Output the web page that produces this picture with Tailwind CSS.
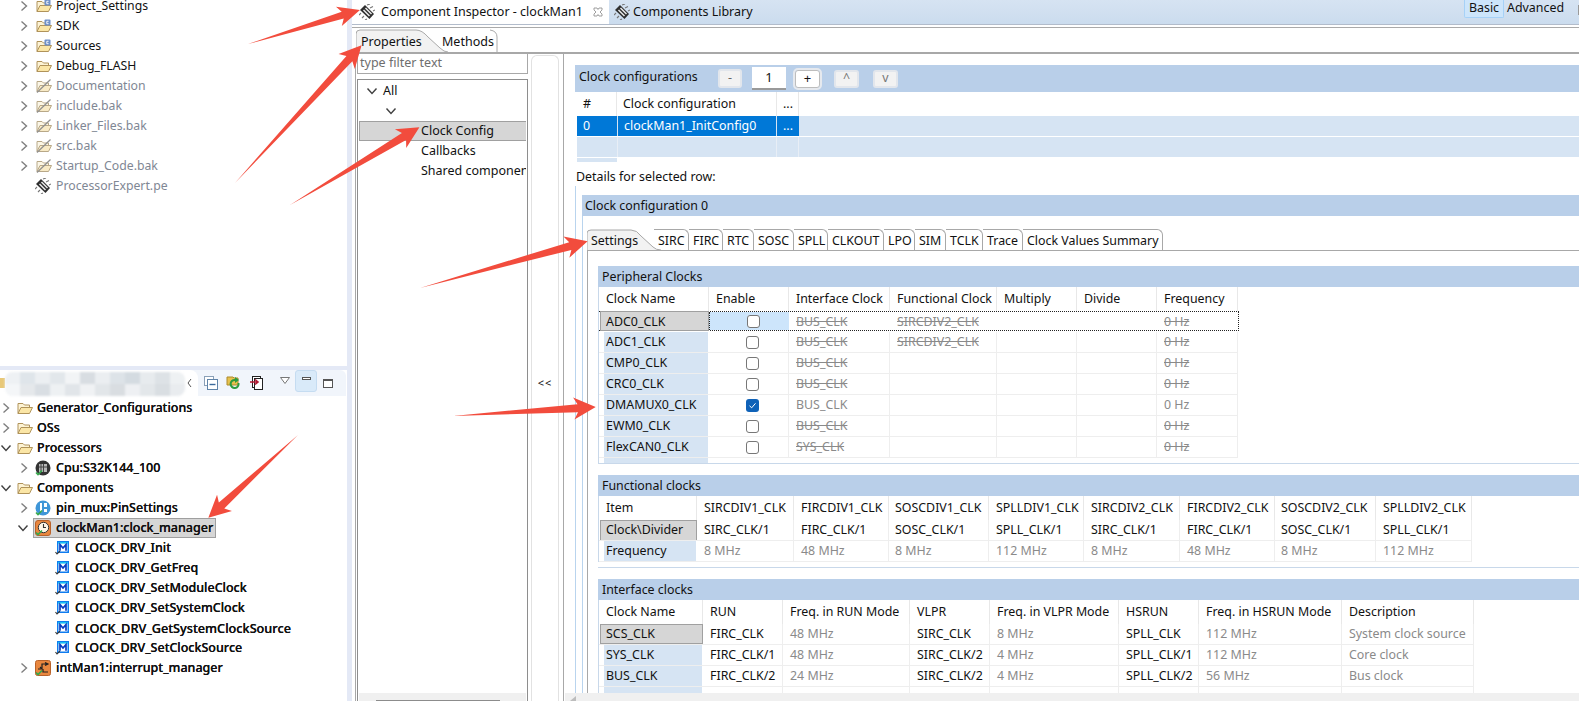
<!DOCTYPE html>
<html>
<head>
<meta charset="utf-8">
<script src="https://cdn.jsdelivr.net/npm/@tailwindcss/browser@4"></script>
</head>
<body class="m-0 bg-white">
<svg class="absolute w-0 h-0">
<defs>
<symbol id="chev-r" viewBox="0 0 10 12"><path d="M2.5 1.5 L7.5 6 L2.5 10.5" fill="none" stroke="#7f7f7f" stroke-width="1.4"/></symbol>
<symbol id="chev-d" viewBox="0 0 12 10"><path d="M1.5 2.5 L6 7.5 L10.5 2.5" fill="none" stroke="#404040" stroke-width="1.4"/></symbol>
<symbol id="folder" viewBox="0 0 16 14"><path d="M1 12.5 V2.5 H6 L7.5 4 H12.5 V6.5" fill="#fdf3d4" stroke="#b0935a"/><path d="M1 12.5 L4 6.5 H15.5 L12.5 12.5 Z" fill="#fbe6a6" stroke="#b0935a"/></symbol>
<symbol id="folder-c" viewBox="0 0 16 14"><path d="M1 12.5 V2.5 H6 L7.5 4 H12.5 V6.5" fill="#fdf3d4" stroke="#b0935a"/><path d="M1 12.5 L4 6.5 H15.5 L12.5 12.5 Z" fill="#fbe6a6" stroke="#b0935a"/><rect x="8.5" y="0.5" width="6" height="6" rx="1" fill="#6f90c8"/><path d="M12.6 2.3 H10.8 V4.7 H12.6" fill="none" stroke="#fff" stroke-width="0.9"/></symbol>
<symbol id="folder-x" viewBox="0 0 16 14"><path d="M1 12.5 V2.5 H6 L7.5 4 H12.5 V6.5" fill="#fbf6e6" stroke="#b8a888"/><path d="M1 12.5 L4 6.5 H15.5 L12.5 12.5 Z" fill="#f8eac6" stroke="#b8a888"/><path d="M1 13.5 L14.5 0.5" stroke="#8f8f8f" stroke-width="1.2"/></symbol>
<symbol id="chip" viewBox="0 0 16 16"><path d="M6 1 L15 10 L10.5 15 L1 6 Z" fill="#2f2f2f"/><path d="M6.5 4 L12.5 10 M4.5 6 L10.5 12" stroke="#e8e8e8" stroke-width="1.5"/><path d="M8 1 L11 0 M11 4 L14 2.5 M14 7 L16 6 M2 9 L0 11 M5 12 L3 14 M8 15 L6 16" stroke="#777" stroke-width="1.1"/></symbol>
<symbol id="m" viewBox="0 0 14 14"><rect x="2.75" y="0.75" width="10.5" height="10.5" fill="#fff" stroke="#0f7cf0" stroke-width="1.5"/><rect x="3" y="1" width="10" height="1.6" fill="#1ac0f4"/><path d="M5 9.8 V3.6 L8 7 L11 3.6 V9.8" fill="none" stroke="#0a3cc0" stroke-width="1.7"/><path d="M0.5 11 L2 13 L5 10" fill="none" stroke="#333" stroke-width="1.1"/></symbol>
<symbol id="cpu" viewBox="0 0 16 16"><circle cx="8" cy="8" r="7.5" fill="#333"/><rect x="4" y="4" width="8" height="8" fill="#b8b8b8"/><path d="M6 4 V12 M8.5 4 V12 M4 7 H12" stroke="#444"/><path d="M1 8.5 L3 10.5 L7 6.5" fill="none" stroke="#35a84c" stroke-width="1.6" transform="translate(0 4)"/></symbol>
<symbol id="pin" viewBox="0 0 16 16"><circle cx="8" cy="8" r="7.5" fill="#3f96d8"/><path d="M5 3 H7 V12 H5 Z M9 3 H12 V7 H9 Z M9 9 H12 V12 H9 Z" fill="#fff"/><path d="M1 8.5 L3 10.5 L7 6.5" fill="none" stroke="#35a84c" stroke-width="1.6" transform="translate(0 4)"/></symbol>
<symbol id="clk" viewBox="0 0 16 16"><rect x="0.5" y="0.5" width="15" height="15" rx="2.5" fill="#e9873f" stroke="#b9622a"/><circle cx="8.5" cy="7.5" r="5.2" fill="#fff6e6" stroke="#333"/><path d="M8.5 4 V7.5 H11" fill="none" stroke="#333" stroke-width="1.1"/><path d="M1 8.5 L3 10.5 L7 6.5" fill="none" stroke="#35a84c" stroke-width="1.6" transform="translate(0 4)"/></symbol>
<symbol id="int" viewBox="0 0 16 16"><rect x="0.5" y="0.5" width="15" height="15" rx="2" fill="#e9873f" stroke="#b9622a"/><path d="M3 9 H7 V4 H13 M5 7 L7 9 M10 2.5 L13 4 L10 5.5 M8 9 V12 H13" fill="none" stroke="#222" stroke-width="1.2"/><path d="M1 8.5 L3 10.5 L7 6.5" fill="none" stroke="#35a84c" stroke-width="1.6" transform="translate(0 4)"/></symbol>
</defs>
</svg>

<div class="relative flex w-[1579px] h-[701px] overflow-hidden text-[12.4px] leading-none text-[#111] font-['Noto_Sans',sans-serif]">

<!-- LEFT COLUMN -->
<div class="flex flex-col w-[347px] shrink-0 h-full">
  <div class="flex flex-col h-[370px] shrink-0 -mt-[4px] text-[12.25px]">
    <div class="flex items-center h-5 shrink-0 pl-[19px]"><svg class="w-[10px] h-3"><use href="#chev-r"/></svg><svg class="w-4 h-[14px] ml-[7px]"><use href="#folder-c"/></svg><span class="ml-1">Project_Settings</span></div>
    <div class="flex items-center h-5 shrink-0 pl-[19px]"><svg class="w-[10px] h-3"><use href="#chev-r"/></svg><svg class="w-4 h-[14px] ml-[7px]"><use href="#folder-c"/></svg><span class="ml-1">SDK</span></div>
    <div class="flex items-center h-5 shrink-0 pl-[19px]"><svg class="w-[10px] h-3"><use href="#chev-r"/></svg><svg class="w-4 h-[14px] ml-[7px]"><use href="#folder-c"/></svg><span class="ml-1">Sources</span></div>
    <div class="flex items-center h-5 shrink-0 pl-[19px]"><svg class="w-[10px] h-3"><use href="#chev-r"/></svg><svg class="w-4 h-[14px] ml-[7px]"><use href="#folder"/></svg><span class="ml-1">Debug_FLASH</span></div>
    <div class="flex items-center h-5 shrink-0 pl-[19px] text-[#7f8794]"><svg class="w-[10px] h-3"><use href="#chev-r"/></svg><svg class="w-4 h-[14px] ml-[7px]"><use href="#folder-x"/></svg><span class="ml-1">Documentation</span></div>
    <div class="flex items-center h-5 shrink-0 pl-[19px] text-[#7f8794]"><svg class="w-[10px] h-3"><use href="#chev-r"/></svg><svg class="w-4 h-[14px] ml-[7px]"><use href="#folder-x"/></svg><span class="ml-1">include.bak</span></div>
    <div class="flex items-center h-5 shrink-0 pl-[19px] text-[#7f8794]"><svg class="w-[10px] h-3"><use href="#chev-r"/></svg><svg class="w-4 h-[14px] ml-[7px]"><use href="#folder-x"/></svg><span class="ml-1">Linker_Files.bak</span></div>
    <div class="flex items-center h-5 shrink-0 pl-[19px] text-[#7f8794]"><svg class="w-[10px] h-3"><use href="#chev-r"/></svg><svg class="w-4 h-[14px] ml-[7px]"><use href="#folder-x"/></svg><span class="ml-1">src.bak</span></div>
    <div class="flex items-center h-5 shrink-0 pl-[19px] text-[#7f8794]"><svg class="w-[10px] h-3"><use href="#chev-r"/></svg><svg class="w-4 h-[14px] ml-[7px]"><use href="#folder-x"/></svg><span class="ml-1">Startup_Code.bak</span></div>
    <div class="flex items-center h-5 shrink-0 pl-[35px] text-[#7f8794]"><svg class="w-4 h-4"><use href="#chip"/></svg><span class="ml-[5px]">ProcessorExpert.pe</span></div>
  </div>
  <div class="h-1 shrink-0 bg-[#e4e9f6]"></div>
  <!-- bottom panel -->
  <div class="flex flex-col flex-1 min-h-0">
    <div class="flex items-center h-[26px] shrink-0 bg-[#f1f5fb] relative rounded-tr-md mr-[1px]">
      <div class="flex w-[198px] h-full bg-white rounded-tr-lg items-center">
        <div class="w-[5px] h-[10px] bg-[#e8c878] shrink-0"></div>
        <div class="grid grid-cols-[repeat(12,15px)] grid-rows-2 w-[180px] h-[24px] mt-[2px] rounded-lg overflow-hidden blur-[1px] bg-[#f0f2f4]">
          <div class="bg-[#eef1f4]"></div><div class="bg-[#dfe5ea]"></div><div class="bg-[#eceff2]"></div><div class="bg-[#e2e7eb]"></div><div class="bg-[#f2f4f6]"></div><div class="bg-[#d8dde2]"></div><div class="bg-[#ebeef1]"></div><div class="bg-[#dde3e8]"></div><div class="bg-[#d4dbe1]"></div><div class="bg-[#e7ebee]"></div><div class="bg-[#dde2e6]"></div><div class="bg-[#eef1f3]"></div>
          <div class="bg-[#f4f6f8]"></div><div class="bg-[#e5e8eb]"></div><div class="bg-[#d9dee3]"></div><div class="bg-[#eef1f3]"></div><div class="bg-[#e1e5e9]"></div><div class="bg-[#f0f2f4]"></div><div class="bg-[#e2e6e9]"></div><div class="bg-[#d9dde1]"></div><div class="bg-[#eef0f3]"></div><div class="bg-[#e3e7ea]"></div><div class="bg-[#d9dee2]"></div><div class="bg-[#e9ecef]"></div>
        </div>
        <svg class="w-[5px] h-[10px] ml-[2px]" viewBox="0 0 5 10"><path d="M4 1 L1 5 L4 9" fill="none" stroke="#555"/></svg>
      </div>
      <svg class="w-[14px] h-[14px] ml-[6px]" viewBox="0 0 14 14"><rect x="0.5" y="0.5" width="9" height="9" fill="#fff" stroke="#8aa0b8"/><rect x="3.5" y="3.5" width="10" height="10" fill="#fff" stroke="#5f83a8"/><path d="M5.5 8.5 H11.5" stroke="#3c6a9c" stroke-width="1.4"/></svg>
      <svg class="w-4 h-4 ml-[8px]" viewBox="0 0 16 16"><path d="M1 2 H7 L8 3 H12 V10 H1 Z" fill="#e6c14d" stroke="#ad8a2c"/><path d="M13.5 8 A5 5 0 1 1 9 4 L9 2 L13 5 L9 8 V6 A3 3 0 1 0 11.5 8 Z" fill="#2d9c3f"/></svg>
      <svg class="w-[14px] h-[14px] ml-[7px]" viewBox="0 0 14 14"><rect x="3.5" y="0.5" width="8" height="11" fill="#fff" stroke="#222"/><rect x="5.5" y="2.5" width="8" height="11" fill="#fff" stroke="#222"/><path d="M1 6 H9 M6 3.5 L9 6 L6 8.5" fill="none" stroke="#b01832" stroke-width="1.6"/></svg>
      <svg class="w-[10px] h-[8px] ml-[17px] -mt-1" viewBox="0 0 10 8"><path d="M0.5 0.5 H9.5 L5 6.5 Z" fill="#fff" stroke="#777"/></svg>
      <div class="flex items-center justify-center w-[22px] h-[22px] ml-[5px] -mt-1 bg-[#d9eaf9] border border-[#c5dcf1] rounded-[3px]"><div class="w-[9px] h-[3px] border border-[#555] bg-white -mt-[6px]"></div></div>
      <div class="w-[10px] h-[9px] ml-[6px] border border-[#555] border-t-2 bg-white"></div>
    </div>
    <div class="flex flex-col pt-[2px] font-medium text-[12.5px] [text-shadow:0_0_0.4px_#111]">
      <div class="flex items-center h-5 shrink-0 pl-[1px]"><svg class="w-[10px] h-3"><use href="#chev-r"/></svg><svg class="w-4 h-[14px] ml-[6px]"><use href="#folder"/></svg><span class="ml-[4px]">Generator_Configurations</span></div>
      <div class="flex items-center h-5 shrink-0 pl-[1px]"><svg class="w-[10px] h-3"><use href="#chev-r"/></svg><svg class="w-4 h-[14px] ml-[6px]"><use href="#folder"/></svg><span class="ml-[4px]">OSs</span></div>
      <div class="flex items-center h-5 shrink-0"><svg class="w-3 h-[10px]"><use href="#chev-d"/></svg><svg class="w-4 h-[14px] ml-[5px]"><use href="#folder"/></svg><span class="ml-[4px]">Processors</span></div>
      <div class="flex items-center h-5 shrink-0 pl-[19px]"><svg class="w-[10px] h-3"><use href="#chev-r"/></svg><svg class="w-4 h-4 ml-[6px]"><use href="#cpu"/></svg><span class="ml-[5px]">Cpu:S32K144_100</span></div>
      <div class="flex items-center h-5 shrink-0"><svg class="w-3 h-[10px]"><use href="#chev-d"/></svg><svg class="w-4 h-[14px] ml-[5px]"><use href="#folder"/></svg><span class="ml-[4px]">Components</span></div>
      <div class="flex items-center h-5 shrink-0 pl-[19px]"><svg class="w-[10px] h-3"><use href="#chev-r"/></svg><svg class="w-4 h-4 ml-[6px]"><use href="#pin"/></svg><span class="ml-[5px]">pin_mux:PinSettings</span></div>
      <div class="flex items-center h-5 shrink-0 pl-[17px]"><svg class="w-3 h-[10px]"><use href="#chev-d"/></svg><div class="flex items-center h-5 w-[183px] ml-[4px] pl-[1px] bg-[#d6d6d6] border border-[#9f9f9f]"><svg class="w-4 h-4 shrink-0"><use href="#clk"/></svg><span class="ml-[5px] whitespace-nowrap">clockMan1:clock_manager</span></div></div>
      <div class="flex items-center h-5 shrink-0 pl-[55px]"><svg class="w-[14px] h-[14px]"><use href="#m"/></svg><span class="ml-[6px]">CLOCK_DRV_Init</span></div>
      <div class="flex items-center h-5 shrink-0 pl-[55px]"><svg class="w-[14px] h-[14px]"><use href="#m"/></svg><span class="ml-[6px]">CLOCK_DRV_GetFreq</span></div>
      <div class="flex items-center h-5 shrink-0 pl-[55px]"><svg class="w-[14px] h-[14px]"><use href="#m"/></svg><span class="ml-[6px]">CLOCK_DRV_SetModuleClock</span></div>
      <div class="flex items-center h-5 shrink-0 pl-[55px]"><svg class="w-[14px] h-[14px]"><use href="#m"/></svg><span class="ml-[6px]">CLOCK_DRV_SetSystemClock</span></div>
      <div class="flex items-center h-5 shrink-0 pl-[55px]"><svg class="w-[14px] h-[14px]"><use href="#m"/></svg><span class="ml-[6px] text-[12.7px]">CLOCK_DRV_GetSystemClockSource</span></div>
      <div class="flex items-center h-5 shrink-0 pl-[55px]"><svg class="w-[14px] h-[14px]"><use href="#m"/></svg><span class="ml-[6px]">CLOCK_DRV_SetClockSource</span></div>
      <div class="flex items-center h-5 shrink-0 pl-[19px]"><svg class="w-[10px] h-3"><use href="#chev-r"/></svg><svg class="w-4 h-4 ml-[6px]"><use href="#int"/></svg><span class="ml-[5px]">intMan1:interrupt_manager</span></div>
    </div>
  </div>
</div>

<!-- SASH -->
<div class="w-[5px] shrink-0 h-full bg-[#e4e9f6]"></div>

<!-- RIGHT -->
<div class="flex flex-col flex-1 min-w-0 h-full">
  <!-- top tabs -->
  <div class="flex h-[25px] shrink-0 bg-gradient-to-b from-[#d6e3f2] to-[#cbdcee] border-b border-[#b2bccb]">
    <div class="flex items-center w-[257px] h-full bg-white pl-[7px]">
      <svg class="w-4 h-4"><use href="#chip"/></svg>
      <span class="ml-[6px] text-[12.5px]">Component Inspector - clockMan1</span>
      <svg class="w-[10px] h-[10px] ml-[10px]" viewBox="0 0 10 10"><path d="M1 1 L4 1 L5 2.5 L6 1 L9 1 L9 3 L7 5 L9 7 L9 9 L6 9 L5 7.5 L4 9 L1 9 L1 7 L3 5 L1 3 Z" fill="#fff" stroke="#888" stroke-width="0.8"/></svg>
    </div>
    <div class="flex items-center h-full pl-[5px]">
      <svg class="w-4 h-4"><use href="#chip"/></svg>
      <span class="ml-[3px] text-[12.5px]">Components Library</span>
    </div>
    <div class="flex items-start ml-auto h-full">
      <div class="flex items-center justify-center w-[40px] h-[18px] bg-[#cde5fb] border border-[#a6d1f7] border-t-0 rounded-b-[2px]">Basic</div>
      <div class="ml-[3px] mr-[14px] h-[17px] flex items-center">Advanced</div>
      <div class="w-[1px] h-[10px] mt-[5px] bg-[#999]"></div>
    </div>
  </div>
  <div class="h-[2px] shrink-0 bg-white"></div>
  <!-- prop tabs -->
  <div class="relative flex h-[27px] shrink-0 border-t border-[#aaa] border-b-2 border-b-[#a8a8a8] pl-[7px] text-[12.5px]">
    <svg class="absolute left-[4px] top-0 w-[142px] h-[24px]" viewBox="0 0 142 24" fill="none"><path d="M0 24 V6 Q0 2 4 2 H60 Q66 2 72 9 L84 20 Q88 24 92 24 Z" fill="#f2f2f2"/><path d="M0 24 V6 Q0 2 4 2 H60 Q66 2 72 9 L84 20 Q88 24 92 24" stroke="#aaa"/><path d="M134 2 Q141 3 141 9 V24" stroke="#aaa"/></svg>
    <span class="relative mt-[8px] ml-[2px] w-[81px]">Properties</span>
    <span class="relative mt-[8px]">Methods</span>
  </div>
  <!-- body -->
  <div class="flex flex-1 min-h-0">
    <!-- filter + tree -->
    <div class="flex flex-col w-[173px] ml-[3px] shrink-0 pl-[1px] border-l border-[#a8a8a8]">
      <div class="flex items-center h-[20px] shrink-0 w-[171px] border-x border-b border-[#a8a8a8] pl-[2px] text-[#6e6e6e] text-[12.5px]">type filter text</div>
      <div class="flex flex-col flex-1 w-[171px] mt-[5px] border-x border-t border-[#8e8e8e] pt-[1px] pl-[1px] pr-[1px] text-[12.5px]">
        <div class="flex items-center h-5 pl-[7px]"><svg class="w-3 h-[10px]"><use href="#chev-d"/></svg><span class="ml-[5px]">All</span></div>
        <div class="flex items-center h-5 pl-[26px]"><svg class="w-3 h-[10px]"><use href="#chev-d"/></svg></div>
        <div class="flex items-center h-5 pl-[61px] bg-[#d6d6d6] border-y border-l border-[#a0a0a0]">Clock Config</div>
        <div class="flex items-center h-5 pl-[62px]">Callbacks</div>
        <div class="flex items-center h-5 pl-[62px] whitespace-nowrap overflow-hidden">Shared components</div>
        <div class="mt-auto h-[8px] bg-[#f0f0f0] flex items-end pl-[17px]"><div class="w-[124px] h-[1px] bg-[#8c8c8c]"></div></div>
      </div>
    </div>
    <!-- collapse -->
    <div class="flex items-center justify-center w-[28px] shrink-0 ml-[3px] mt-[1px] pt-2 border-x border-t border-[#e2e2e2] rounded-t-md text-[11px] tracking-[1px]">&lt;&lt;</div>
    <div class="w-[1px] ml-[4px] shrink-0 bg-[#a8a8a8]"></div>
    <!-- editor -->
    <div class="flex flex-col flex-1 min-w-0">
      <div class="flex-1 min-h-0 overflow-hidden pl-[11px] pt-[11px] flex flex-col">
        <!-- Clock configurations -->
        <div class="flex items-center h-[27px] shrink-0 bg-[#b9cfe9]">
          <span class="ml-[4px] -mt-[2px] w-[139px]">Clock configurations</span>
          <div class="flex items-center justify-center w-6 h-[19px] bg-[#f2f2f2] rounded-[3px] border-2 border-[#e2e6ec] text-[#666]">-</div>
          <div class="flex items-center justify-center w-[34px] h-[23px] ml-[10px] bg-white border-b-2 border-[#999] -mt-[1px] text-[13px]">1</div>
          <div class="flex items-center justify-center w-[25px] h-[18px] ml-[9px] bg-white rounded-[3px] border border-[#bdbdbd] outline-2 -outline-offset-0 outline-[#e6e9ee] text-[13px]">+</div>
          <div class="flex items-center justify-center w-[25px] h-[18px] ml-[14px] bg-[#f2f2f2] rounded-[3px] border-2 border-[#e2e6ec] text-[#777]">^</div>
          <div class="flex items-center justify-center w-[25px] h-[18px] ml-[14px] bg-[#f2f2f2] rounded-[3px] border-2 border-[#e2e6ec] text-[#777]">v</div>
        </div>
        <div class="grid grid-cols-[42px_160px_22px] h-[24px] shrink-0 items-center">
          <div class="flex items-center h-full pl-[8px] border-r border-[#e8e8e8]">#</div>
          <div class="flex items-center h-full pl-[6px] border-r border-[#e8e8e8]">Clock configuration</div>
          <div class="flex items-center h-full pl-[6px] border-r border-[#e8e8e8]">...</div>
        </div>
        <div class="flex h-[20px] shrink-0 ml-[2px] bg-[#d6e4f3]">
          <div class="grid grid-cols-[40px_160px_22px] h-full bg-[#0078d7] text-white w-[222px] items-center">
            <div class="pl-[6px]">0</div>
            <div class="pl-[6px] border-x border-[#d6e4f3] h-full flex items-center">clockMan1_InitConfig0</div>
            <div class="pl-[6px]">...</div>
          </div>
        </div>
        <div class="grid grid-cols-[40px_160px_22px_1fr] h-[22px] shrink-0 ml-[2px] bg-[#d6e4f3] border-y border-white">
          <div></div><div class="border-x border-[#e8eef6]"></div><div class="border-r border-[#e8eef6]"></div><div></div>
        </div>
        <div class="h-[4px] shrink-0 ml-[2px] bg-white"><div class="w-[40px] h-full bg-[#d6e4f3]"></div></div>
        <div class="mt-[6px] h-[18px] shrink-0 pl-[1px] flex items-center">Details for selected row:</div>
        <!-- Clock configuration 0 -->
        <div class="flex-1 min-h-0 border-l border-[#b9d4ee] pl-[6px] pt-[9px]">
          <div class="h-full border-l border-[#b9d4ee]">
          <div class="flex items-center h-[21px] bg-[#b9cfe9] pl-[3px] pt-[2px] -ml-[1px]">Clock configuration 0</div>
          <div class="pl-[4px] pt-[13px]">
            <div class="relative flex items-center h-[22px] border-b border-[#a8a8a8] [&>span]:pt-[3px]">
              <svg class="absolute left-0 top-0 w-[76px] h-[22px]" viewBox="0 0 76 22" fill="none"><path d="M0 21 V4 Q0 1 4 1 H44 Q50 1 54 7 L66 18 Q69 21 74 21 Z" fill="#f2f2f2"/><path d="M0 21 V4 Q0 1 4 1 H44 Q50 1 54 7 L66 18 Q69 21 74 21" stroke="#a8a8a8"/></svg>
              <span class="relative pl-[4px] w-[67px] shrink-0">Settings</span>
              <span class="relative flex items-center shrink-0 w-[35px] h-full pl-[4px] border-r border-t border-[#a8a8a8] rounded-tr-md">SIRC</span>
              <span class="flex items-center shrink-0 w-[34px] h-full pl-[4px] border-r border-t border-[#a8a8a8] rounded-tr-md">FIRC</span>
              <span class="flex items-center shrink-0 w-[31px] h-full pl-[4px] border-r border-t border-[#a8a8a8] rounded-tr-md">RTC</span>
              <span class="flex items-center shrink-0 w-[40px] h-full pl-[4px] border-r border-t border-[#a8a8a8] rounded-tr-md">SOSC</span>
              <span class="flex items-center shrink-0 w-[34px] h-full pl-[4px] border-r border-t border-[#a8a8a8] rounded-tr-md">SPLL</span>
              <span class="flex items-center shrink-0 w-[56px] h-full pl-[4px] border-r border-t border-[#a8a8a8] rounded-tr-md">CLKOUT</span>
              <span class="flex items-center shrink-0 w-[31px] h-full pl-[4px] border-r border-t border-[#a8a8a8] rounded-tr-md">LPO</span>
              <span class="flex items-center shrink-0 w-[31px] h-full pl-[4px] border-r border-t border-[#a8a8a8] rounded-tr-md">SIM</span>
              <span class="flex items-center shrink-0 w-[37px] h-full pl-[4px] border-r border-t border-[#a8a8a8] rounded-tr-md">TCLK</span>
              <span class="flex items-center shrink-0 w-[40px] h-full pl-[4px] border-r border-t border-[#a8a8a8] rounded-tr-md">Trace</span>
              <span class="flex items-center shrink-0 w-[140px] h-full pl-[4px] border-r border-t border-[#a8a8a8] rounded-tr-md">Clock Values Summary</span>
            </div>
            <div class="border-l border-[#a8a8a8] pl-[10px] pt-[15px]">
              <!-- Peripheral -->
              <div class="border-b border-[#c8d8ea] h-[198px] overflow-hidden whitespace-nowrap">
                <div class="flex items-center h-[21px] bg-[#b9cfe9] pl-[4px] pt-[2px]">Peripheral Clocks</div>
                <div class="border-l border-[#c8d8ea]">
                <div class="grid grid-cols-[110px_80px_101px_107px_80px_80px_81px] h-[24px] w-fit">
                  <div class="flex items-center pl-[7px] border-r border-[#e8e8e8]">Clock Name</div>
                  <div class="flex items-center pl-[7px] border-r border-[#e8e8e8]">Enable</div>
                  <div class="flex items-center pl-[7px] border-r border-[#e8e8e8]">Interface Clock</div>
                  <div class="flex items-center pl-[7px] border-r border-[#e8e8e8]">Functional Clock</div>
                  <div class="flex items-center pl-[7px] border-r border-[#e8e8e8]">Multiply</div>
                  <div class="flex items-center pl-[7px] border-r border-[#e8e8e8]">Divide</div>
                  <div class="flex items-center pl-[7px] border-r border-[#e8e8e8]">Frequency</div>
                </div>
                <div class="grid grid-cols-[110px_80px_101px_107px_80px_80px_81px] h-[20px] w-[640px] border-y border-dotted border-[#222] text-[#8a8a8a] border-r">
                  <div class="flex items-center pl-[5px] pt-[2px] ml-[1px] bg-[#d6d6d6] text-[#111] border border-[#a0a0a0] -my-[1px]">ADC0_CLK</div>
                  <div class="flex items-center pl-[37px] bg-[#cde5fb] border-l border-dotted border-[#222]"><span class="w-[13px] h-[13px] rounded-[3px] border border-[#777] bg-white"></span></div>
                  <div class="flex items-center pl-[7px] pt-[2px] line-through">BUS_CLK</div>
                  <div class="flex items-center pl-[7px] pt-[2px] line-through">SIRCDIV2_CLK</div>
                  <div></div><div></div>
                  <div class="flex items-center pl-[7px] pt-[2px] line-through">0 Hz</div>
                </div>
                <div class="grid grid-cols-[110px_80px_101px_107px_80px_80px_81px] h-[21px] mt-[1px] w-fit text-[#8a8a8a] border-b border-[#eee]">
                  <div class="flex items-center ml-[5px] pl-[2px] mr-[1px] bg-[#d6e4f3] text-[#111]">ADC1_CLK</div>
                  <div class="flex items-center pl-[37px] border-r border-[#eee]"><span class="w-[13px] h-[13px] rounded-[3px] border border-[#777] bg-white"></span></div>
                  <div class="flex items-center pl-[7px] border-r border-[#eee] line-through">BUS_CLK</div>
                  <div class="flex items-center pl-[7px] border-r border-[#eee] line-through">SIRCDIV2_CLK</div>
                  <div class="border-r border-[#eee]"></div><div class="border-r border-[#eee]"></div>
                  <div class="flex items-center pl-[7px] border-r border-[#eee] line-through">0 Hz</div>
                </div>
                <div class="grid grid-cols-[110px_80px_101px_107px_80px_80px_81px] h-[21px] w-fit text-[#8a8a8a] border-b border-[#eee]">
                  <div class="flex items-center ml-[5px] pl-[2px] mr-[1px] bg-[#d6e4f3] text-[#111]">CMP0_CLK</div>
                  <div class="flex items-center pl-[37px] border-r border-[#eee]"><span class="w-[13px] h-[13px] rounded-[3px] border border-[#777] bg-white"></span></div>
                  <div class="flex items-center pl-[7px] border-r border-[#eee] line-through">BUS_CLK</div>
                  <div class="border-r border-[#eee]"></div><div class="border-r border-[#eee]"></div><div class="border-r border-[#eee]"></div>
                  <div class="flex items-center pl-[7px] border-r border-[#eee] line-through">0 Hz</div>
                </div>
                <div class="grid grid-cols-[110px_80px_101px_107px_80px_80px_81px] h-[21px] w-fit text-[#8a8a8a] border-b border-[#eee]">
                  <div class="flex items-center ml-[5px] pl-[2px] mr-[1px] bg-[#d6e4f3] text-[#111]">CRC0_CLK</div>
                  <div class="flex items-center pl-[37px] border-r border-[#eee]"><span class="w-[13px] h-[13px] rounded-[3px] border border-[#777] bg-white"></span></div>
                  <div class="flex items-center pl-[7px] border-r border-[#eee] line-through">BUS_CLK</div>
                  <div class="border-r border-[#eee]"></div><div class="border-r border-[#eee]"></div><div class="border-r border-[#eee]"></div>
                  <div class="flex items-center pl-[7px] border-r border-[#eee] line-through">0 Hz</div>
                </div>
                <div class="grid grid-cols-[110px_80px_101px_107px_80px_80px_81px] h-[21px] w-fit text-[#8a8a8a] border-b border-[#eee]">
                  <div class="flex items-center ml-[5px] pl-[2px] mr-[1px] bg-[#d6e4f3] text-[#111]">DMAMUX0_CLK</div>
                  <div class="flex items-center pl-[37px] border-r border-[#eee]"><svg class="w-[13px] h-[13px] rounded-[3px] bg-[#0f62b8]" viewBox="0 0 13 13"><path d="M3.5 6.8 L5.7 8.8 L9.5 4.3" fill="none" stroke="#fff" stroke-width="1"/></svg></div>
                  <div class="flex items-center pl-[7px] border-r border-[#eee]">BUS_CLK</div>
                  <div class="border-r border-[#eee]"></div><div class="border-r border-[#eee]"></div><div class="border-r border-[#eee]"></div>
                  <div class="flex items-center pl-[7px] border-r border-[#eee]">0 Hz</div>
                </div>
                <div class="grid grid-cols-[110px_80px_101px_107px_80px_80px_81px] h-[21px] w-fit text-[#8a8a8a] border-b border-[#eee]">
                  <div class="flex items-center ml-[5px] pl-[2px] mr-[1px] bg-[#d6e4f3] text-[#111]">EWM0_CLK</div>
                  <div class="flex items-center pl-[37px] border-r border-[#eee]"><span class="w-[13px] h-[13px] rounded-[3px] border border-[#777] bg-white"></span></div>
                  <div class="flex items-center pl-[7px] border-r border-[#eee] line-through">BUS_CLK</div>
                  <div class="border-r border-[#eee]"></div><div class="border-r border-[#eee]"></div><div class="border-r border-[#eee]"></div>
                  <div class="flex items-center pl-[7px] border-r border-[#eee] line-through">0 Hz</div>
                </div>
                <div class="grid grid-cols-[110px_80px_101px_107px_80px_80px_81px] h-[21px] w-fit text-[#8a8a8a] border-b border-[#eee]">
                  <div class="flex items-center ml-[5px] pl-[2px] mr-[1px] bg-[#d6e4f3] text-[#111]">FlexCAN0_CLK</div>
                  <div class="flex items-center pl-[37px] border-r border-[#eee]"><span class="w-[13px] h-[13px] rounded-[3px] border border-[#777] bg-white"></span></div>
                  <div class="flex items-center pl-[7px] border-r border-[#eee] line-through">SYS_CLK</div>
                  <div class="border-r border-[#eee]"></div><div class="border-r border-[#eee]"></div><div class="border-r border-[#eee]"></div>
                  <div class="flex items-center pl-[7px] border-r border-[#eee] line-through">0 Hz</div>
                </div>
                <div class="h-[6px] ml-[5px] w-[104px] bg-[#d6e4f3]"></div>
                </div>
              </div>
              <!-- Functional -->
              <div class="mt-[11px] border-b border-[#c8d8ea] h-[93px] overflow-hidden whitespace-nowrap">
                <div class="flex items-center h-[21px] bg-[#b9cfe9] pl-[4px] pt-[2px]">Functional clocks</div>
                <div class="border-l border-[#c8d8ea]">
                <div class="grid grid-cols-[98px_97px_95px_100px_95px_96px_95px_101px_96px] h-[24px] w-fit">
                  <div class="flex items-center pl-[7px] border-r border-[#e8e8e8]">Item</div>
                  <div class="flex items-center pl-[7px] border-r border-[#e8e8e8]">SIRCDIV1_CLK</div>
                  <div class="flex items-center pl-[7px] border-r border-[#e8e8e8]">FIRCDIV1_CLK</div>
                  <div class="flex items-center pl-[6px] border-r border-[#e8e8e8]">SOSCDIV1_CLK</div>
                  <div class="flex items-center pl-[7px] border-r border-[#e8e8e8]">SPLLDIV1_CLK</div>
                  <div class="flex items-center pl-[7px] border-r border-[#e8e8e8]">SIRCDIV2_CLK</div>
                  <div class="flex items-center pl-[7px] border-r border-[#e8e8e8]">FIRCDIV2_CLK</div>
                  <div class="flex items-center pl-[6px] border-r border-[#e8e8e8]">SOSCDIV2_CLK</div>
                  <div class="flex items-center pl-[7px] border-r border-[#e8e8e8]">SPLLDIV2_CLK</div>
                </div>
                <div class="grid grid-cols-[98px_97px_95px_100px_95px_96px_95px_101px_96px] h-[21px] w-fit border-b border-[#eee]">
                  <div class="flex items-center pl-[5px] ml-[1px] bg-[#d6d6d6] border border-[#a0a0a0] border-b-0">Clock\Divider</div>
                  <div class="flex items-center pl-[7px] border-r border-[#eee]">SIRC_CLK/1</div>
                  <div class="flex items-center pl-[7px] border-r border-[#eee]">FIRC_CLK/1</div>
                  <div class="flex items-center pl-[6px] border-r border-[#eee]">SOSC_CLK/1</div>
                  <div class="flex items-center pl-[7px] border-r border-[#eee]">SPLL_CLK/1</div>
                  <div class="flex items-center pl-[7px] border-r border-[#eee]">SIRC_CLK/1</div>
                  <div class="flex items-center pl-[7px] border-r border-[#eee]">FIRC_CLK/1</div>
                  <div class="flex items-center pl-[6px] border-r border-[#eee]">SOSC_CLK/1</div>
                  <div class="flex items-center pl-[7px] border-r border-[#eee]">SPLL_CLK/1</div>
                </div>
                <div class="grid grid-cols-[98px_97px_95px_100px_95px_96px_95px_101px_96px] h-[21px] w-fit text-[#8a8a8a] border-b border-[#eee] [&>div]:pt-[1px]">
                  <div class="flex items-center ml-[5px] pl-[2px] mr-[1px] bg-[#d6e4f3] text-[#111]">Frequency</div>
                  <div class="flex items-center pl-[7px] border-r border-[#eee]">8 MHz</div>
                  <div class="flex items-center pl-[7px] border-r border-[#eee]">48 MHz</div>
                  <div class="flex items-center pl-[6px] border-r border-[#eee]">8 MHz</div>
                  <div class="flex items-center pl-[7px] border-r border-[#eee]">112 MHz</div>
                  <div class="flex items-center pl-[7px] border-r border-[#eee]">8 MHz</div>
                  <div class="flex items-center pl-[7px] border-r border-[#eee]">48 MHz</div>
                  <div class="flex items-center pl-[6px] border-r border-[#eee]">8 MHz</div>
                  <div class="flex items-center pl-[7px] border-r border-[#eee]">112 MHz</div>
                </div>
                </div>
              </div>
              <!-- Interface -->
              <div class="mt-[11px] whitespace-nowrap">
                <div class="flex items-center h-[21px] bg-[#b9cfe9] pl-[4px] pt-[2px]">Interface clocks</div>
                <div class="border-l border-[#c8d8ea]">
                <div class="grid grid-cols-[104px_80px_127px_80px_129px_80px_143px_132px] h-[24px] w-fit">
                  <div class="flex items-center pl-[7px] border-r border-[#e8e8e8]">Clock Name</div>
                  <div class="flex items-center pl-[7px] border-r border-[#e8e8e8]">RUN</div>
                  <div class="flex items-center pl-[7px] border-r border-[#e8e8e8]">Freq. in RUN Mode</div>
                  <div class="flex items-center pl-[7px] border-r border-[#e8e8e8]">VLPR</div>
                  <div class="flex items-center pl-[7px] border-r border-[#e8e8e8]">Freq. in VLPR Mode</div>
                  <div class="flex items-center pl-[7px] border-r border-[#e8e8e8]">HSRUN</div>
                  <div class="flex items-center pl-[7px] border-r border-[#e8e8e8]">Freq. in HSRUN Mode</div>
                  <div class="flex items-center pl-[7px] border-r border-[#e8e8e8]">Description</div>
                </div>
                <div class="grid grid-cols-[104px_80px_127px_80px_129px_80px_143px_132px] h-[21px] w-fit text-[#8a8a8a] border-b border-[#eee]">
                  <div class="flex items-center pl-[5px] ml-[1px] bg-[#d6d6d6] border border-[#a0a0a0] text-[#111]">SCS_CLK</div>
                  <div class="flex items-center pl-[7px] border-r border-[#eee] text-[#111]">FIRC_CLK</div>
                  <div class="flex items-center pl-[7px] border-r border-[#eee]">48 MHz</div>
                  <div class="flex items-center pl-[7px] border-r border-[#eee] text-[#111]">SIRC_CLK</div>
                  <div class="flex items-center pl-[7px] border-r border-[#eee]">8 MHz</div>
                  <div class="flex items-center pl-[7px] border-r border-[#eee] text-[#111]">SPLL_CLK</div>
                  <div class="flex items-center pl-[7px] border-r border-[#eee]">112 MHz</div>
                  <div class="flex items-center pl-[7px] border-r border-[#eee]">System clock source</div>
                </div>
                <div class="grid grid-cols-[104px_80px_127px_80px_129px_80px_143px_132px] h-[21px] w-fit text-[#8a8a8a] border-b border-[#eee] [&>div]:pt-[1px]">
                  <div class="flex items-center pl-[2px] ml-[5px] mr-[1px] bg-[#d6e4f3] text-[#111]">SYS_CLK</div>
                  <div class="flex items-center pl-[7px] border-r border-[#eee] text-[#111]">FIRC_CLK/1</div>
                  <div class="flex items-center pl-[7px] border-r border-[#eee]">48 MHz</div>
                  <div class="flex items-center pl-[7px] border-r border-[#eee] text-[#111]">SIRC_CLK/2</div>
                  <div class="flex items-center pl-[7px] border-r border-[#eee]">4 MHz</div>
                  <div class="flex items-center pl-[7px] border-r border-[#eee] text-[#111]">SPLL_CLK/1</div>
                  <div class="flex items-center pl-[7px] border-r border-[#eee]">112 MHz</div>
                  <div class="flex items-center pl-[7px] border-r border-[#eee]">Core clock</div>
                </div>
                <div class="grid grid-cols-[104px_80px_127px_80px_129px_80px_143px_132px] h-[21px] w-fit text-[#8a8a8a] border-b border-[#eee] [&>div]:pt-[1px]">
                  <div class="flex items-center pl-[2px] ml-[5px] mr-[1px] bg-[#d6e4f3] text-[#111]">BUS_CLK</div>
                  <div class="flex items-center pl-[7px] border-r border-[#eee] text-[#111]">FIRC_CLK/2</div>
                  <div class="flex items-center pl-[7px] border-r border-[#eee]">24 MHz</div>
                  <div class="flex items-center pl-[7px] border-r border-[#eee] text-[#111]">SIRC_CLK/2</div>
                  <div class="flex items-center pl-[7px] border-r border-[#eee]">4 MHz</div>
                  <div class="flex items-center pl-[7px] border-r border-[#eee] text-[#111]">SPLL_CLK/2</div>
                  <div class="flex items-center pl-[7px] border-r border-[#eee]">56 MHz</div>
                  <div class="flex items-center pl-[7px] border-r border-[#eee]">Bus clock</div>
                </div>
                <div class="grid grid-cols-[104px_80px_127px_80px_129px_80px_143px_132px] h-[6px] w-fit">
                  <div class="ml-[5px] mr-[1px] bg-[#d6e4f3]"></div>
                  <div class="border-r border-[#eee]"></div><div class="border-r border-[#eee]"></div><div class="border-r border-[#eee]"></div><div class="border-r border-[#eee]"></div><div class="border-r border-[#eee]"></div><div class="border-r border-[#eee]"></div><div class="border-r border-[#eee]"></div>
                </div>
                </div>
              </div>
            </div>
          </div>
          </div>
        </div>
      </div>
      <!-- hscroll -->
      <div class="flex items-end h-[8px] shrink-0 ml-[1px] bg-[#f0f0f0] pl-[5px]"><svg class="w-[6px] h-[5px]" viewBox="0 0 6 5"><path d="M6 0 V5 H0 Z" fill="#bdbdbd"/></svg></div>
    </div>
  </div>
</div>

<!-- ARROWS -->
<svg class="absolute left-0 top-0 w-[1579px] h-[701px] pointer-events-none" viewBox="0 0 1579 701" fill="#f24c3d">
  <polygon points="0,0 99,-3.5 95,-10 117,0 95,10 99,3.5" transform="translate(248 44) rotate(-16.9)"/>
  <polygon points="0,0 169,-4 165,-11 187,0 165,11 169,4" transform="translate(235 183) rotate(-47.4)"/>
  <polygon points="0,0 133,-4 129,-11 151,0 129,11 133,4" transform="translate(290 205) rotate(-31)"/>
  <polygon points="0,0 156,-4 152,-11 174,0 152,11 156,4" transform="translate(420 288) rotate(-15.6)"/>
  <polygon points="0,0 125,-4 121,-11 143,0 121,11 125,4" transform="translate(453 416) rotate(-3.6)"/>
  <polygon points="0,0 104,-4 100,-11 122,0 100,11 104,4" transform="translate(298 435) rotate(137.3)"/>
</svg>
</div>
</body>
</html>
